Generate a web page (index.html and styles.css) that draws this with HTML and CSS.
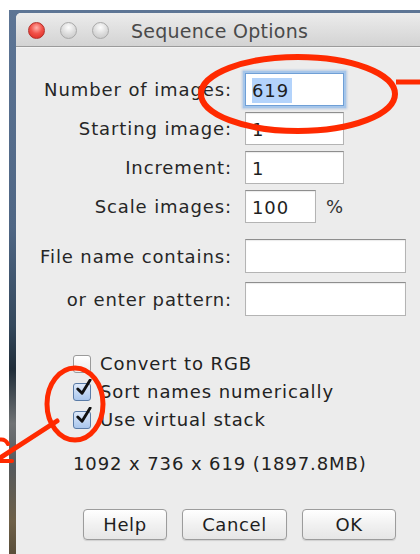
FILE: index.html
```html
<!DOCTYPE html>
<html lang="en">
<head>
<meta charset="utf-8">
<title>Sequence Options</title>
<link rel="stylesheet" href="styles.css">
</head>
<body>
<div class="desktop">
  <div class="window">
    <div class="titlebar">
      <div class="lights">
        <span class="light close"></span>
        <span class="light"></span>
        <span class="light"></span>
      </div>
      <div class="title">Sequence Options</div>
    </div>
    <div class="content">
      <div class="form">
        <label class="lbl">Number of images:</label>
        <div class="field wide focused"><span class="sel">619</span></div>
        <label class="lbl">Starting image:</label>
        <div class="field wide">1</div>
        <label class="lbl">Increment:</label>
        <div class="field wide">1</div>
        <label class="lbl">Scale images:</label>
        <div class="unit-row"><div class="field narrow">100</div><span class="unit">%</span></div>
        <label class="lbl gap-top">File name contains:</label>
        <div class="field long gap-top"></div>
        <label class="lbl gap-small">or enter pattern:</label>
        <div class="field long gap-small"></div>
      </div>

      <div class="checks">
        <div class="check-row"><span class="box"></span><span>Convert to RGB</span></div>
        <div class="check-row"><span class="box on"><svg viewBox="0 0 20 20" class="tick"><path d="M4 10.5 L8.5 15 L17 1" fill="none" stroke="#111" stroke-width="3" stroke-linecap="round" stroke-linejoin="round"/></svg></span><span>Sort names numerically</span></div>
        <div class="check-row"><span class="box on"><svg viewBox="0 0 20 20" class="tick"><path d="M4 10.5 L8.5 15 L17 1" fill="none" stroke="#111" stroke-width="3" stroke-linecap="round" stroke-linejoin="round"/></svg></span><span>Use virtual stack</span></div>
      </div>

      <div class="info">1092 x 736 x 619 (1897.8MB)</div>

      <div class="buttons">
        <button class="btn help">Help</button>
        <button class="btn cancel">Cancel</button>
        <button class="btn ok">OK</button>
      </div>
    </div>
  </div>
</div>

<!-- red markup drawn over the dialog -->
<svg class="marks" width="420" height="554" viewBox="0 0 420 554">
  <g fill="none" stroke="#ff2a00" stroke-linecap="round">
    <ellipse cx="298" cy="94" rx="97" ry="37" stroke-width="6"/>
    <line x1="396" y1="82" x2="422" y2="82" stroke-width="5" stroke-linecap="butt"/>
    <ellipse cx="75" cy="404" rx="28" ry="36" stroke-width="5"/>
    <line x1="57" y1="421" x2="0" y2="458" stroke-width="5"/>
    <line x1="-2" y1="461" x2="12" y2="461" stroke-width="4"/>
    <path d="M-2 440 Q5 438 8 444" stroke-width="4"/>
  </g>
</svg>
</body>
</html>
```

FILE: styles.css
```css
html, body {
  margin: 0;
  padding: 0;
  background: #ffffff;
  width: 420px;
  height: 554px;
  overflow: hidden;
  position: relative;
}

body {
  font-family: "DejaVu Sans", "Liberation Sans", sans-serif;
  color: #222;
}

/* desktop strip behind the dialog */
.desktop {
  margin: 10px 0 0 9px;
  height: 544px;
  padding: 3px 0 0 7px;
  box-sizing: border-box;
  background: linear-gradient(to bottom,
    #5d7595 0%, #4f6684 40%, #34485c 58%, #1f2c38 66%,
    #6f7274 76%, #55595c 84%, #6e6048 94%, #5a4e3a 100%);
}

.window {
  height: 100%;
  width: 420px;
  background: #ececec;
  border-radius: 5px 0 0 0;
  overflow: hidden;
  display: flex;
  flex-direction: column;
}

.titlebar {
  height: 33px;
  flex: none;
  display: flex;
  align-items: center;
  background: linear-gradient(to bottom, #ececec, #d3d3d3);
  border-bottom: 1px solid #9b9b9b;
  box-shadow: 0 1px 0 #f4f4f4;
}

.lights {
  display: flex;
  gap: 15px;
  padding-left: 12px;
  padding-top: 2px;
}

.light {
  width: 15px;
  height: 15px;
  border-radius: 50%;
  border: 1px solid #a9a9a9;
  background: radial-gradient(circle at 50% 30%, #fdfdfd 0%, #dadada 55%, #c4c4c4 100%);
}

.light.close {
  border-color: #b3302b;
  background: radial-gradient(circle at 50% 32%, #ffb3ad 0%, #f2534a 45%, #d9251d 100%);
}

.title {
  margin-left: 22px;
  font-size: 19px;
  letter-spacing: 0.25px;
  color: #4a4a4a;
  padding-top: 2px;
}

.content {
  flex: 1;
  padding-top: 26px;
  display: flex;
  flex-direction: column;
}

.form {
  display: grid;
  grid-template-columns: 216px auto;
  column-gap: 13px;
  row-gap: 6px;
  align-items: center;
}

.lbl {
  text-align: right;
  font-size: 18px;
  letter-spacing: 0.9px;
  color: #262626;
  white-space: nowrap;
}

.gap-top {
  margin-top: 10px;
}

.gap-small {
  margin-top: 3px;
}

.field {
  height: 33px;
  box-sizing: border-box;
  background: #fff;
  border: 1px solid #b4b4b4;
  border-top-color: #8e8e8e;
  font-size: 18px;
  line-height: 33px;
  padding-left: 6px;
  letter-spacing: 0.9px;
  color: #1e1e1e;
  box-shadow: inset 0 1px 1px rgba(0,0,0,0.08);
}

.wide { width: 99px; }
.narrow { width: 71px; }
.long { width: 161px; height: 34px; }

.focused {
  border: 1px solid #6f9fd6;
  box-shadow: 0 0 0 2px #a6c6ea, 0 0 2px 3px rgba(120,160,215,0.45);
}

.sel {
  background: #b3d3fb;
  padding: 2px 3px 2px 0;
}

.unit-row {
  display: flex;
  align-items: center;
  gap: 10px;
}

.unit {
  font-size: 18px;
  color: #333;
}

.checks {
  margin-top: 38px;
  padding-left: 57px;
  display: flex;
  flex-direction: column;
  gap: 9px;
}

.check-row {
  display: flex;
  align-items: center;
  gap: 9px;
  font-size: 18px;
  letter-spacing: 0.9px;
  height: 19px;
  color: #222;
}

.box {
  width: 18px;
  height: 18px;
  box-sizing: border-box;
  border: 1px solid #9a9a9a;
  border-radius: 3px;
  background: linear-gradient(to bottom, #ffffff, #ececec);
  position: relative;
  flex: none;
}

.box.on {
  border-color: #5a7ba6;
  background: linear-gradient(to bottom, #dfeafa, #a9c6ec);
}

.tick {
  position: absolute;
  width: 19px;
  height: 19px;
  left: 0;
  top: -5px;
}

.info {
  margin-top: 24px;
  padding-left: 57px;
  font-size: 18px;
  letter-spacing: 0.9px;
  color: #222;
}

.buttons {
  margin-top: 35px;
  padding-left: 67px;
  display: flex;
  gap: 15px;
}

.btn {
  height: 31px;
  font-family: "DejaVu Sans", "Liberation Sans", sans-serif;
  font-size: 18px;
  letter-spacing: 0.6px;
  color: #1e1e1e;
  border: 1px solid #9c9c9c;
  border-radius: 4px;
  background: linear-gradient(to bottom, #ffffff, #f1f1f1 50%, #e6e6e6);
  box-shadow: 0 1px 1px rgba(0,0,0,0.12);
  padding: 0;
}

.help { width: 84px; }
.cancel { width: 105px; }
.ok { width: 94px; }

.marks {
  position: absolute;
  left: 0;
  top: 0;
  pointer-events: none;
}
```
